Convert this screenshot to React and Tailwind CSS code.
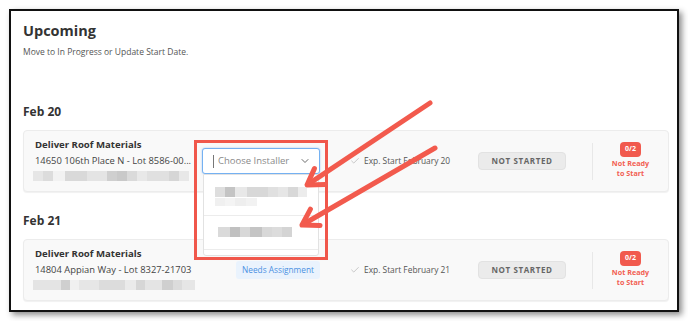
import React from "react";
import { Check, ChevronDown } from "lucide-react";

// blurred (redacted) text: [width, colour]
const blurCard1 = [
  [10, "#e6e6e6"], [10, "#dcdcdc"], [12, "#f2f2f2"], [22, "#d9d9d9"], [20, "#e4e4e4"],
  [10, "#cfcfcf"], [10, "#c9c9c9"], [10, "#dadada"], [10, "#e8e8e8"], [22, "#e0e0e0"],
  [10, "#d6d6d6"], [10, "#e8e8e8"],
];
const blurCard2 = [
  [32, "#e4e4e4"], [10, "#cfcfcf"], [10, "#f0f0f0"], [22, "#e6e6e6"], [30, "#dcdcdc"],
  [12, "#eaeaea"], [10, "#d6d6d6"], [20, "#e4e4e4"], [12, "#cfcfcf"], [10, "#dcdcdc"],
  [15, "#e6e6e6"],
];
const blurItem1a = [
  [10, "#dedede"], [10, "#c4c4c4"], [12, "#e8e8e8"], [21, "#d8d8d8"], [10, "#e0e0e0"],
  [10, "#e6e6e6"], [10, "#d8d8d8"], [9, "#ececec"],
];
const blurItem1b = [[10, "#f0f0f0"], [10, "#f4f4f4"], [11, "#eeeeee"], [11, "#f2f2f2"]];
const blurItem2 = [
  [12, "#dadada"], [10, "#c0c0c0"], [10, "#d8d8d8"], [12, "#c4c4c4"], [10, "#d8d8d8"],
  [10, "#dcdcdc"], [10, "#d4d4d4"],
];

const Blur = ({ parts, h = "h-[10px]" }) => (
  <div className={`flex ${h}`}>
    {parts.map(([w, c], i) => (
      <div key={i} className="h-full" style={{ width: w, background: c }} />
    ))}
  </div>
);

const Card = ({ address, blur, assigned }) => (
  <div className="flex items-center h-[62px] bg-[#f9f9f9] border border-[#ececec] rounded-[4px] shadow-[0_1px_1px_rgba(0,0,0,0.06)]">
    {/* Left - task */}
    <div className="w-[171px] pl-[11px] mb-[5px]">
      <p className="text-[9.6px] font-bold text-[#333] leading-[16px]">Deliver Roof Materials</p>
      <p className="text-[9.4px] text-[#444] leading-[16px] whitespace-nowrap overflow-hidden text-ellipsis">
        {address}
      </p>
      <div className="mt-[2px] -ml-[2px]">
        <Blur parts={blur} />
      </div>
    </div>

    {/* Installer */}
    <div className="w-[118px] ml-[7px] flex justify-end">
      {assigned ? (
        <div className="w-full h-[26px]" />
      ) : (
        <span className="px-[6px] h-[18px] flex items-center rounded-[3px] bg-[#eaf3fd] text-[#4a90e2] text-[8.3px]">
          Needs Assignment
        </span>
      )}
    </div>

    {/* Exp start */}
    <div className="w-[158px] pl-[30px] flex items-center gap-[4px] text-[8.4px] text-[#555]">
      <Check size={10} strokeWidth={1.5} className="text-[#aaa]" />
      <span>{assigned ? "Exp. Start February 20" : "Exp. Start February 21"}</span>
    </div>

    {/* Status */}
    <div className="w-[88px] h-[18px] flex items-center justify-center rounded-[4px] bg-[#ebebeb] border border-[#e2e2e2] text-[8px] font-bold tracking-[0.6px] text-[#666]">
      NOT STARTED
    </div>

    <div className="ml-[26px] w-px h-[37px] bg-[#e8e8e8]" />

    {/* Readiness */}
    <div className="flex-1 flex flex-col items-center mb-[2px]">
      <span className="px-[5px] h-[15px] flex items-center rounded-[4px] bg-[#f15a4e] text-white text-[7px] font-bold">
        0/2
      </span>
      <span className="mt-px text-[7.2px] font-bold text-[#f26052] leading-[10px] text-center">
        Not Ready
        <br />
        to Start
      </span>
    </div>
  </div>
);

const Arrow = ({ x1, y1, x2, y2 }) => {
  const dx = x2 - x1;
  const dy = y2 - y1;
  const len = Math.hypot(dx, dy);
  const ux = dx / len;
  const uy = dy / len;
  const a = (32 * Math.PI) / 180;
  const L = 18;
  const w1 = [
    x2 - L * (ux * Math.cos(a) - uy * Math.sin(a)),
    y2 - L * (uy * Math.cos(a) + ux * Math.sin(a)),
  ];
  const w2 = [
    x2 - L * (ux * Math.cos(a) + uy * Math.sin(a)),
    y2 - L * (uy * Math.cos(a) - ux * Math.sin(a)),
  ];
  return (
    <g stroke="#f25a4d" strokeWidth="5" strokeLinecap="round" strokeLinejoin="round" fill="none">
      <line x1={x1} y1={y1} x2={x2 - ux * 2} y2={y2 - uy * 2} />
      <polyline points={`${w1[0]},${w1[1]} ${x2},${y2} ${w2[0]},${w2[1]}`} />
    </g>
  );
};

export default function App() {
  return (
    <div className="relative w-[688px] h-[321px] bg-white overflow-hidden pt-[9px] pl-[9px] font-['Open_Sans',sans-serif]">
      <div className="w-[670px] h-[303px] border-2 border-[#111] bg-white shadow-[3px_3px_6px_rgba(0,0,0,0.45)] pl-[12px] pr-[8px] pt-[10px]">
        <h1 className="text-[14.5px] font-bold text-[#333] leading-[20px]">Upcoming</h1>
        <p className="mt-[4px] text-[8.5px] text-[#555] leading-[14px]">
          Move to In Progress or Update Start Date.
        </p>

        <h2 className="mt-[44px] text-[12px] font-bold text-[#333] leading-[18px]">Feb 20</h2>
        <div className="mt-[9px]">
          <Card address="14650 106th Place N - Lot 8586-00..." blur={blurCard1} assigned />
        </div>

        <h2 className="mt-[20px] text-[12px] font-bold text-[#333] leading-[18px]">Feb 21</h2>
        <div className="mt-[9px]">
          <Card address="14804 Appian Way - Lot 8327-21703" blur={blurCard2} />
        </div>
      </div>

      {/* Installer select (open) */}
      <div className="absolute left-[202px] top-[148px] w-[118px] h-[26px] bg-white border border-[#74b1f2] rounded-[3px] shadow-[0_0_2px_rgba(80,150,240,0.5)] flex items-center pl-[10px] pr-[8px]">
        <span className="w-px h-[13px] bg-[#777]" />
        <span className="ml-[4px] text-[9.5px] text-[#8a8a8a] flex-1">Choose Installer</span>
        <ChevronDown size={12} strokeWidth={1.75} className="text-[#555]" />
      </div>
      <div className="absolute left-[203px] top-[174px] w-[116px] h-[82px] bg-white border border-[#e2e2e2] rounded-b-[3px] overflow-hidden">
        <div className="h-[41px] border-b border-[#ececec] pl-[11px] pt-[12px]">
          <Blur parts={blurItem1a} />
          <div className="mt-px">
            <Blur parts={blurItem1b} h="h-[8px]" />
          </div>
        </div>
        <div className="h-[34px] border-b border-[#ececec] pl-[14px] pt-[11px]">
          <Blur parts={blurItem2} />
        </div>
      </div>

      {/* Annotations */}
      <div className="absolute left-[194px] top-[140px] w-[134px] h-[120px] border-[3px] border-[#f0574b]" />
      <svg className="absolute left-0 top-0" width="688" height="321">
        <Arrow x1={430} y1={103} x2={307} y2={185} />
        <Arrow x1={435} y1={148} x2={302} y2={225} />
      </svg>
    </div>
  );
}
